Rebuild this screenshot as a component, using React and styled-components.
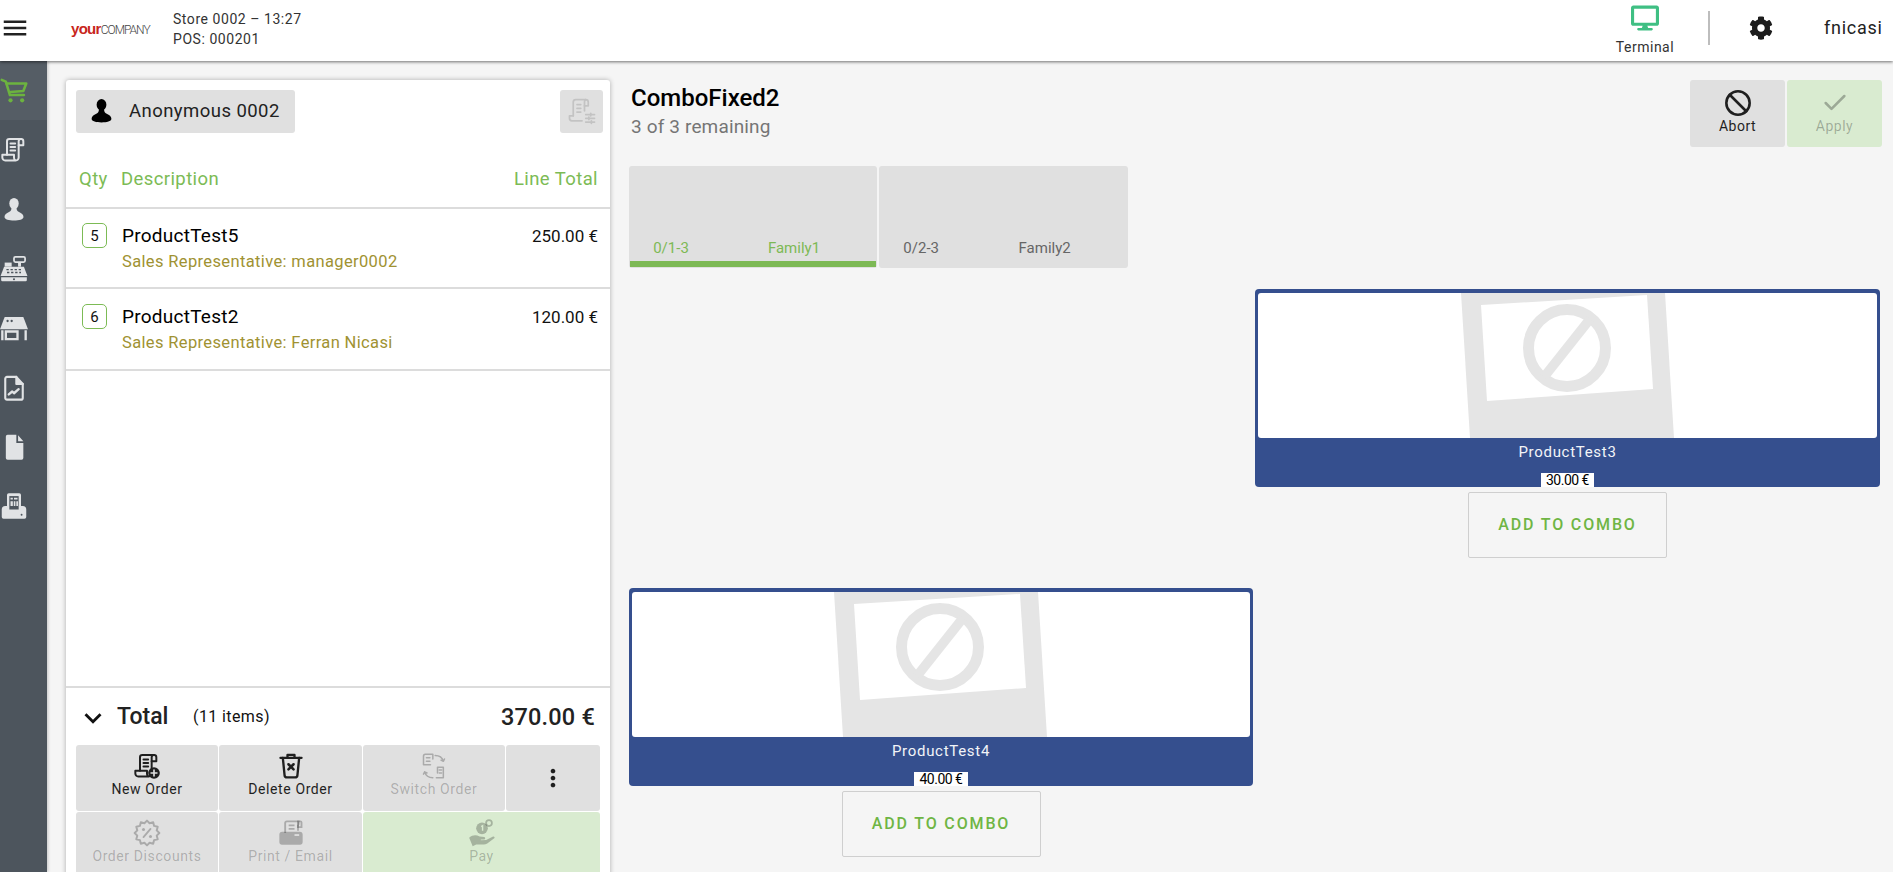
import React from "react";
import styled, { createGlobalStyle } from "styled-components";
import { Ban, Check } from "lucide-react";
import { FaCog, FaDesktop } from "react-icons/fa";
import { MdMenu, MdMoreVert, MdKeyboardArrowDown } from "react-icons/md";

const GlobalStyle = createGlobalStyle`
    html, body {
        margin: 0;
        height: 100%;
        overflow: hidden;
        background: #f5f5f5;
        font-family: Roboto, "Liberation Sans", sans-serif;
    }
    * { box-sizing: border-box; }
`;

const Page = styled.div`
    width: 1893px;
    height: 872px;
    overflow: hidden;
    display: flex;
    flex-direction: column;
`;

/* top bar */
const TopBar = styled.header`
    flex: 0 0 61px;
    position: relative;
    z-index: 2;
    display: flex;
    align-items: center;
    background: #fff;
    box-shadow: 0 1px 3px rgba(0, 0, 0, 0.55);
`;

const MenuButton = styled.div`
    width: 71px;
    padding-bottom: 5px;
    display: flex;
    color: #222;
    font-size: 30px;
`;

const Logo = styled.div`
    width: 102px;
    padding-bottom: 4px;
    display: flex;
    align-items: baseline;
    font-size: 15px;
    line-height: 1;
`;

const LogoYour = styled.span`
    font-family: "Liberation Sans", sans-serif;
    font-weight: 700;
    letter-spacing: -0.7px;
    color: #c8261c;
`;

const LogoCompany = styled.span`
    font-weight: 300;
    font-size: 12px;
    letter-spacing: -1px;
    color: #444;
`;

const StoreInfo = styled.div`
    font-size: 14px;
    line-height: 20px;
    letter-spacing: 0.55px;
    color: #333;
    margin-bottom: 4px;
`;

const TopRight = styled.div`
    margin-left: auto;
    display: flex;
    align-items: center;
`;

const Terminal = styled.div`
    width: 80px;
    margin-right: 23px;
    display: flex;
    flex-direction: column;
    align-items: center;
    font-size: 14px;
    line-height: 18px;
    letter-spacing: 0.5px;
    color: #333;
    margin-bottom: 1px;
    svg {
        color: #3fbf83;
        font-size: 28px;
        margin-bottom: 6px;
    }
`;

const Divider = styled.div`
    width: 2px;
    height: 34px;
    margin-right: 39px;
    margin-bottom: 6px;
    background: #bdbdbd;
`;

const Gear = styled.div`
    display: flex;
    margin-right: 51px;
    font-size: 24px;
    color: #1c1c1c;
    margin-bottom: 6px;
`;

const UserName = styled.div`
    width: 69px;
    font-size: 18px;
    letter-spacing: 0.75px;
    color: #222;
    margin-bottom: 6px;
`;

const Body = styled.div`
    flex: 1;
    display: flex;
    min-height: 0;
`;

/* left rail */
const Rail = styled.nav`
    flex: 0 0 47px;
    background: #4d555d;
    box-shadow: 1px 0 3px rgba(0, 0, 0, 0.2);
`;

const RailItem = styled.div`
    height: 59.4px;
    padding-right: 19px;
    display: flex;
    align-items: center;
    justify-content: center;
    color: ${(p) => (p.$active ? "#6cb33f" : "#e1e3e5")};
    background: ${(p) => (p.$active ? "#555d65" : "transparent")};
    svg {
        width: ${(p) => p.$size}px;
        height: ${(p) => p.$size}px;
        flex: none;
        display: block;
    }
`;

/* order panel */
const OrderPanel = styled.section`
    flex: 0 0 543px;
    height: 798px;
    margin: 19px 0 0 19px;
    display: flex;
    flex-direction: column;
    background: #fff;
    border-radius: 3px;
    box-shadow: 0 0 5px rgba(0, 0, 0, 0.3);
`;

const PanelTop = styled.div`
    height: 53px;
    padding: 10px 7px 0 10px;
    display: flex;
    justify-content: space-between;
`;

const CustomerButton = styled.div`
    width: 219px;
    height: 43px;
    padding: 0 0 2px 13px;
    display: flex;
    align-items: center;
    gap: 15px;
    background: #e0e0e0;
    border-radius: 3px;
    font-size: 18.5px;
    letter-spacing: 0.45px;
    color: #222;
    svg {
        width: 25px;
        height: 25px;
        color: #000;
    }
`;

const ReceiptButton = styled.div`
    width: 43px;
    height: 43px;
    display: flex;
    align-items: center;
    justify-content: center;
    background: #e0e0e0;
    border-radius: 3px;
    color: #c3c3c3;
    svg {
        width: 30px;
        height: 30px;
    }
`;

const ColumnHead = styled.div`
    height: 76px;
    padding: 17px 12px 0 13px;
    display: flex;
    align-items: center;
    border-bottom: 2px solid #dcdcdc;
    font-size: 18.5px;
    letter-spacing: 0.4px;
    color: #7cbb55;
`;

const HeadQty = styled.span`
    width: 42px;
`;

const HeadTotal = styled.span`
    margin-left: auto;
`;

const Lines = styled.div`
    flex: 1;
`;

const LineRow = styled.div`
    height: ${(p) => p.$height}px;
    padding: ${(p) => (p.$height - 52) / 2}px 12px 0 16px;
    display: flex;
    border-bottom: 2px solid #dcdcdc;
`;

const QtyBadge = styled.div`
    flex: 0 0 25px;
    height: 25px;
    margin-right: 15px;
    display: flex;
    align-items: center;
    justify-content: center;
    border: 1px solid #7cbb55;
    border-radius: 5px;
    font-size: 15px;
    color: #111;
`;

const LineText = styled.div`
    flex: 1;
`;

const LineName = styled.div`
    font-size: 19px;
    line-height: 26px;
    letter-spacing: 0.25px;
    color: #000;
`;

const LineRep = styled.div`
    font-size: 16.5px;
    line-height: 26px;
    letter-spacing: 0.36px;
    color: #a09232;
`;

const LinePrice = styled.div`
    font-size: 17px;
    line-height: 26px;
    color: #111;
`;

const Footer = styled.div`
    border-top: 2px solid #dcdcdc;
    padding: 0 10px;
`;

const TotalRow = styled.div`
    height: 57px;
    padding: 0 5px 0 0;
    display: flex;
    align-items: center;
    color: #222;
`;

const Chevron = styled.div`
    display: flex;
    width: 41px;
    margin-top: 3px;
    font-size: 34px;
    color: #111;
`;

const TotalLabel = styled.span`
    width: 76px;
    font-size: 23px;
    font-weight: 500;
`;

const TotalCount = styled.span`
    font-size: 16px;
    letter-spacing: 0.4px;
    color: #111;
`;

const TotalAmount = styled.span`
    margin-left: auto;
    font-size: 23.5px;
    font-weight: 500;
    letter-spacing: 0.2px;
`;

const ActionGrid = styled.div`
    display: grid;
    grid-template-columns: 142px 143px 142px 94px;
    grid-auto-rows: 66px;
    gap: 1px;
`;

const ActionButton = styled.div`
    grid-column: span ${(p) => p.$span || 1};
    display: flex;
    flex-direction: column;
    align-items: center;
    justify-content: ${(p) => (p.$iconOnly ? "center" : "flex-start")};
    padding-top: ${(p) => (p.$iconOnly ? 0 : 7)}px;
    border-radius: 3px;
    background: ${(p) => (p.$primary ? "#d9ebd0" : "#e0e0e0")};
    color: ${(p) => (p.$disabled ? "rgba(0,0,0,0.24)" : "#1f1f1f")};
    font-size: 14px;
    line-height: 18px;
    letter-spacing: 0.6px;
    svg {
        width: 28px;
        height: 28px;
        display: block;
    }
`;

/* combo area */
const Main = styled.main`
    flex: 1;
    min-width: 0;
    padding: 19px 11px 0 19px;
`;

const ComboHead = styled.div`
    height: 86px;
    padding-left: 2px;
    display: flex;
    justify-content: space-between;
`;

const ComboTitle = styled.div`
    padding-top: 4px;
    font-size: 24px;
    font-weight: 500;
    line-height: 28px;
    color: #000;
`;

const ComboSub = styled.div`
    margin-top: 3px;
    font-size: 19px;
    font-weight: 400;
    line-height: 24px;
    letter-spacing: 0.15px;
    color: #757575;
`;

const ComboActions = styled.div`
    display: flex;
    gap: 2px;
`;

const ComboButton = styled.div`
    width: 95px;
    height: 67px;
    padding-top: 9px;
    display: flex;
    flex-direction: column;
    align-items: center;
    border-radius: 3px;
    background: ${(p) => (p.$primary ? "#d9ebd0" : "#e0e0e0")};
    color: ${(p) => (p.$disabled ? "rgba(0,0,0,0.28)" : "#1f1f1f")};
    font-size: 14px;
    line-height: 18px;
    letter-spacing: 0.5px;
    svg {
        width: 28px;
        height: 28px;
    }
`;

const FamilyTabs = styled.div`
    display: flex;
    gap: 2px;
    margin-bottom: 21px;
`;

const FamilyTab = styled.div`
    width: 248px;
    height: 102px;
    padding: 1px;
    display: flex;
    flex-direction: column;
    justify-content: flex-end;
    border-radius: 3px;
    background: #e0e0e0;
    color: ${(p) => (p.$active ? "#7db955" : "#666")};
    font-size: 15px;
    line-height: 20px;
    &:last-child {
        width: 249px;
    }
`;

const TabText = styled.div`
    display: grid;
    grid-template-columns: 1fr 2fr;
    margin-bottom: 3px;
    text-align: center;
`;

const TabBar = styled.div`
    height: 6px;
    background: ${(p) => (p.$active ? "#7db955" : "transparent")};
`;

const ProductGrid = styled.div`
    display: grid;
    grid-template-columns: 624px 625px;
    column-gap: 2px;
    row-gap: 30px;
`;

const ProductCell = styled.div`
    grid-column: ${(p) => p.$column};
    display: flex;
    flex-direction: column;
    align-items: center;
    gap: 5px;
`;

const ProductCard = styled.div`
    width: 100%;
    height: 198px;
    padding: 4px 3px 0;
    display: flex;
    flex-direction: column;
    align-items: center;
    border-radius: 4px;
    background: #354f8e;
`;

const ProductImage = styled.div`
    width: 100%;
    height: 145px;
    flex: none;
    display: flex;
    justify-content: center;
    overflow: hidden;
    border-radius: 3px;
    background: #fff;
    svg {
        display: block;
        width: 214px;
        height: 145px;
    }
`;

const ProductName = styled.div`
    font-size: 15px;
    line-height: 28px;
    letter-spacing: 0.7px;
    color: #f2f4f8;
`;

const ProductPrice = styled.div`
    margin-top: 7px;
    padding: 0 5px;
    background: #fff;
    color: #000;
    font-size: 14px;
    line-height: 14px;
    letter-spacing: -0.5px;
`;

const AddButton = styled.div`
    width: 199px;
    height: 66px;
    padding-bottom: 2px;
    display: flex;
    align-items: center;
    justify-content: center;
    border: 1px solid #cfcfcf;
    border-radius: 2px;
    color: #6fb544;
    font-size: 16px;
    font-weight: 500;
    letter-spacing: 1.85px;
`;

/* drawn icons */
const Svg = ({ children, fill = "none", sw = 1.7 }) => (
    <svg viewBox="0 0 24 24" fill={fill} stroke={fill === "none" ? "currentColor" : "none"} strokeWidth={sw} strokeLinecap="round" strokeLinejoin="round">
        {children}
    </svg>
);

const scrollPaths = (
    <>
        <path d="M18 2.5H8a2 2 0 0 0-2 2V16" />
        <path d="M18 2.5a2 2 0 0 1 2 2V8h-4V4.500a2 2 0 0 1 2-2z" />
        <path d="M16 8v10.500a2.500 2.500 0 0 1-2.500 2.500H4.500A2.500 2.500 0 0 1 2 18.500V16h10v2.500a2.500 2.500 0 0 0 1.500 2.500" />
        <path d="M9 6.500h4M9 9.500h4M9 12.500h4" />
    </>
);

const CartIcon = () => (
    <svg viewBox="0 0 24 24" fill="none" stroke="currentColor" strokeWidth="2.200" strokeLinejoin="round" strokeLinecap="round">
        <path d="M1.500 2.500L5 4l3.500 11.500h12" />
        <path d="M5.500 5.500h17l-2.500 6.500-11 .8" />
        <circle cx="9" cy="20" r="1.800" fill="currentColor" stroke="none" />
        <circle cx="19" cy="20" r="1.800" fill="currentColor" stroke="none" />
    </svg>
);

const ScrollIcon = () => <Svg>{scrollPaths}</Svg>;

const ScrollSlidersIcon = () => (
    <Svg sw={1.4}>
        <path d="M15 2H7a2 2 0 0 0-2 2v11" />
        <path d="M15 2a2 2 0 0 1 2 2v3h-3V4a2 2 0 0 1 1-2z" />
        <path d="M14 7v4" />
        <path d="M5 15H2v2a2 2 0 0 0 2 2h8" />
        <path d="M8 6h3M8 9h3M8 12h3" />
        <path d="M15 14h7M15 17h7M15 20h7" />
        <path d="M19 13v2M17.500 16v2M19.500 19v2" />
    </Svg>
);

const NewOrderIcon = () => (
    <Svg sw={1.7}>
        {scrollPaths}
        <circle cx="18" cy="18" r="5" fill="currentColor" stroke="none" />
        <path d="M18 15.500v5M15.500 18h5" stroke="#e0e0e0" strokeWidth="1.4" />
    </Svg>
);

const TrashIcon = () => (
    <Svg sw={2}>
        <path d="M3 5h18" />
        <path d="M9 4V2.500h6V4" />
        <path d="M5 5l1.500 15a2 2 0 0 0 2 1.800h7a2 2 0 0 0 2-1.800L19 5" />
        <path d="M9.800 10.500l4.400 4.400M14.200 10.500l-4.400 4.400" strokeWidth="2.200" />
    </Svg>
);

const SwitchIcon = () => (
    <Svg sw={1.3}>
        <path d="M3 11V3.500A1.500 1.500 0 0 1 4.500 2H11v4M3 11h6" />
        <path d="M5.500 5h3M5.500 8h3" />
        <path d="M13 3c3 0 6 1.500 7 5M20 8l-2-1M20 8l1-2" />
        <path d="M14 22h6V13h-5v5" />
        <path d="M16.500 15.500h2M16.500 18h2" />
        <path d="M11 22c-3 0-6-1.500-7-5M4 17l2 1M4 17l-1 2" />
    </Svg>
);

// 12 pointed seal, the outline of the discount badge
const sealPoints = Array.from({ length: 24 }, (_, i) => {
    const r = i % 2 === 0 ? 10.6 : 8.6;
    const a = (i * Math.PI) / 12;
    return `${(12 + r * Math.sin(a)).toFixed(2)},${(12 - r * Math.cos(a)).toFixed(2)}`;
}).join(" ");

const DiscountIcon = () => (
    <Svg sw={1.7}>
        <polygon points={sealPoints} />
        <path d="M15 8.500l-6 7" strokeWidth="1.600" />
        <circle cx="9" cy="9" r="1.300" fill="currentColor" stroke="none" />
        <circle cx="15" cy="15" r="1.300" fill="currentColor" stroke="none" />
    </Svg>
);

const PrintIcon = () => (
    <svg viewBox="0 0 24 24">
        <path d="M7 12V3.500A1.500 1.500 0 0 1 8.500 2h10v3" fill="none" stroke="currentColor" strokeWidth="1.600" />
        <path d="M18 2h2a1 1 0 0 1 1 1v4h-3z" fill="none" stroke="currentColor" strokeWidth="1.600" />
        <path d="M18 5v5M10 5.500h5M10 8.500h5" fill="none" stroke="currentColor" strokeWidth="1.600" />
        <path d="M4.500 11h15a2.500 2.500 0 0 1 2.500 2.500V20a2 2 0 0 1-2 2H4a2 2 0 0 1-2-2v-6.500A2.500 2.500 0 0 1 4.500 11z" fill="currentColor" />
        <rect x="15" y="13" width="4" height="1.500" fill="#e0e0e0" />
    </svg>
);

const PayIcon = () => (
    <svg viewBox="0 0 24 24" fill="currentColor">
        <circle cx="12" cy="8" r="5" />
        <circle cx="18" cy="3.500" r="2.500" fill="none" stroke="currentColor" strokeWidth="1.500" />
        <path d="M1 16c3-2.500 6-2.500 9-1l4 .5c1 .2 1 1.800 0 2h-3v.8l4.500-.3 6-3c1-.3 1.800.8 1 1.500l-6 4.500c-1 .6-2 .8-3 .8H7l-3 1.500z" />
        <path d="M11.300 6.500l1.200-.7V10" fill="none" stroke="#d9ebd0" strokeWidth="1.200" />
    </svg>
);

const PersonIcon = () => (
    <Svg fill="currentColor">
        <ellipse cx="12" cy="6.500" rx="4.700" ry="5.500" />
        <path d="M9.500 10.500c0 2.500-.5 3.500-2.500 4.500-2.500 1.200-4.500 2.500-4.500 5 0 2.500 4.500 3.500 9.500 3.500s9.500-1 9.500-3.500c0-2.500-2-3.800-4.500-5-2-1-2.500-2-2.500-4.500z" />
    </Svg>
);

const RegisterIcon = () => (
    <svg viewBox="0 0 24 24" fill="currentColor">
        <rect x="12" y="1.500" width="9.500" height="4.500" rx="1.200" fill="none" stroke="currentColor" strokeWidth="1.500" />
        <rect x="15.500" y="6" width="2.500" height="4" />
        <rect x="4" y="6.500" width="6" height="3.500" />
        <path d="M3.500 10h17l3 8H.5z" />
        <path d="M5.500 12.500h2M9 12.500h2M12.500 12.500h2M16 12.500h2M6 15h2M9.500 15h2M13 15h2M16.500 15h1.500" stroke="#4d555d" strokeWidth="1.100" />
        <path d="M1 19h22v2.500a1 1 0 0 1-1 1H2a1 1 0 0 1-1-1z" />
        <circle cx="12" cy="20.800" r="0.900" fill="#4d555d" />
    </svg>
);

const StoreIcon = () => (
    <svg viewBox="0 0 24 24" fill="currentColor">
        <path d="M4 2.500h16l4 10.500H0z" />
        <circle cx="6.500" cy="6" r="1" fill="#4d555d" />
        <circle cx="10" cy="6" r="1" fill="#4d555d" />
        <path d="M1 14h2v8.500H1zM21 14h2v8.500h-2zM4 14h12v8.500H4zM6 16v4.500h8V16z" fillRule="evenodd" />
    </svg>
);

const ReportIcon = () => (
    <Svg sw={1.8}>
        <path d="M6 2.500h8l5.500 6v12a1.500 1.500 0 0 1-1.500 1.500H6a1.500 1.500 0 0 1-1.500-1.500v-16.500A1.500 1.500 0 0 1 6 2.500z" />
        <path d="M14 2.500v6h5.500" fill="currentColor" />
        <path d="M7.500 17.500l3-2.500 1.500 1.500 4-3.500" strokeWidth="2" />
    </Svg>
);

const FileIcon = () => (
    <svg viewBox="0 0 24 24" fill="currentColor">
        <path d="M6.500 1.500h7.500v7h6v13a1.500 1.500 0 0 1-1.500 1.500h-12A1.500 1.500 0 0 1 5 21.500v-18.500a1.500 1.500 0 0 1 1.500-1.500zM15.500 2l4.500 5h-4.500z" />
    </svg>
);

const PosIcon = () => (
    <svg viewBox="0 0 24 24" fill="currentColor">
        <path d="M7.500 1h9A1.500 1.500 0 0 1 18 2.500V12h1.500a3 3 0 0 1 3 3v6.500a1.500 1.500 0 0 1-1.500 1.500H3a1.500 1.500 0 0 1-1.500-1.500V15a3 3 0 0 1 3-3H6V2.500A1.500 1.500 0 0 1 7.500 1z" />
        <path d="M8 3.500h8V15H8z" fill="#4d555d" />
        <path d="M9 5h2v1.500H9zM12 5h3v1.500h-3zM9 8h2v4H9zM11.800 8h1.400v4h-1.400zM14 8h1.400v4H14z" />
        <circle cx="18.500" cy="19.500" r="0.800" fill="#4d555d" />
    </svg>
);

const Placeholder = () => (
    <svg viewBox="0 0 214 145">
        <polygon points="0,0 204,0 213,145 9,145" fill="#e5e5e5" />
        <polygon points="20,12 186,2 192,96 26,108" fill="#fff" />
        <circle cx="106" cy="55" r="38.500" fill="none" stroke="#e5e5e5" strokeWidth="11" />
        <line x1="129" y1="26" x2="83" y2="84" stroke="#e5e5e5" strokeWidth="9.500" />
    </svg>
);

const railItems = [
    { icon: <CartIcon />, size: 28 },
    { icon: <ScrollIcon />, size: 28 },
    { icon: <PersonIcon />, size: 24 },
    { icon: <RegisterIcon />, size: 28 },
    { icon: <StoreIcon />, size: 28 },
    { icon: <ReportIcon />, size: 28 },
    { icon: <FileIcon />, size: 28 },
    { icon: <PosIcon />, size: 28 },
];

const orderLines = [
    { qty: 5, name: "ProductTest5", rep: "manager0002", price: "250.00 €", height: 80 },
    { qty: 6, name: "ProductTest2", rep: "Ferran Nicasi", price: "120.00 €", height: 82 },
];

const products = [
    { name: "ProductTest3", price: "30.00 €", column: 2 },
    { name: "ProductTest4", price: "40.00 €", column: 1 },
];

function App() {
    return (
        <Page>
            <GlobalStyle />
            <TopBar>
                <MenuButton>
                    <MdMenu />
                </MenuButton>
                <Logo>
                    <LogoYour>your</LogoYour>
                    <LogoCompany>COMPANY</LogoCompany>
                </Logo>
                <StoreInfo>
                    <div>Store 0002 – 13:27</div>
                    <div>POS: 000201</div>
                </StoreInfo>
                <TopRight>
                    <Terminal>
                        <FaDesktop />
                        Terminal
                    </Terminal>
                    <Divider />
                    <Gear>
                        <FaCog />
                    </Gear>
                    <UserName>fnicasi</UserName>
                </TopRight>
            </TopBar>
            <Body>
                <Rail>
                    {railItems.map((item, i) => (
                        <RailItem key={i} $active={i === 0} $size={item.size}>
                            {item.icon}
                        </RailItem>
                    ))}
                </Rail>
                <OrderPanel>
                    <PanelTop>
                        <CustomerButton>
                            <PersonIcon />
                            Anonymous 0002
                        </CustomerButton>
                        <ReceiptButton>
                            <ScrollSlidersIcon />
                        </ReceiptButton>
                    </PanelTop>
                    <ColumnHead>
                        <HeadQty>Qty</HeadQty>
                        <span>Description</span>
                        <HeadTotal>Line Total</HeadTotal>
                    </ColumnHead>
                    <Lines>
                        {orderLines.map((line) => (
                            <LineRow key={line.name} $height={line.height}>
                                <QtyBadge>{line.qty}</QtyBadge>
                                <LineText>
                                    <LineName>{line.name}</LineName>
                                    <LineRep>Sales Representative: {line.rep}</LineRep>
                                </LineText>
                                <LinePrice>{line.price}</LinePrice>
                            </LineRow>
                        ))}
                    </Lines>
                    <Footer>
                        <TotalRow>
                            <Chevron>
                                <MdKeyboardArrowDown />
                            </Chevron>
                            <TotalLabel>Total</TotalLabel>
                            <TotalCount>(11 items)</TotalCount>
                            <TotalAmount>370.00 €</TotalAmount>
                        </TotalRow>
                        <ActionGrid>
                            <ActionButton>
                                <NewOrderIcon />
                                New Order
                            </ActionButton>
                            <ActionButton>
                                <TrashIcon />
                                Delete Order
                            </ActionButton>
                            <ActionButton $disabled>
                                <SwitchIcon />
                                Switch Order
                            </ActionButton>
                            <ActionButton $iconOnly>
                                <MdMoreVert />
                            </ActionButton>
                            <ActionButton $disabled>
                                <DiscountIcon />
                                Order Discounts
                            </ActionButton>
                            <ActionButton $disabled>
                                <PrintIcon />
                                Print / Email
                            </ActionButton>
                            <ActionButton $disabled $primary $span={2}>
                                <PayIcon />
                                Pay
                            </ActionButton>
                        </ActionGrid>
                    </Footer>
                </OrderPanel>
                <Main>
                    <ComboHead>
                        <ComboTitle>
                            ComboFixed2
                            <ComboSub>3 of 3 remaining</ComboSub>
                        </ComboTitle>
                        <ComboActions>
                            <ComboButton>
                                <Ban strokeWidth={2.2} />
                                Abort
                            </ComboButton>
                            <ComboButton $primary $disabled>
                                <Check strokeWidth={2.2} />
                                Apply
                            </ComboButton>
                        </ComboActions>
                    </ComboHead>
                    <FamilyTabs>
                        <FamilyTab $active>
                            <TabText>
                                <span>0/1-3</span>
                                <span>Family1</span>
                            </TabText>
                            <TabBar $active />
                        </FamilyTab>
                        <FamilyTab>
                            <TabText>
                                <span>0/2-3</span>
                                <span>Family2</span>
                            </TabText>
                            <TabBar />
                        </FamilyTab>
                    </FamilyTabs>
                    <ProductGrid>
                        {products.map((product) => (
                            <ProductCell key={product.name} $column={product.column}>
                                <ProductCard>
                                    <ProductImage>
                                        <Placeholder />
                                    </ProductImage>
                                    <ProductName>{product.name}</ProductName>
                                    <ProductPrice>{product.price}</ProductPrice>
                                </ProductCard>
                                <AddButton>ADD TO COMBO</AddButton>
                            </ProductCell>
                        ))}
                    </ProductGrid>
                </Main>
            </Body>
        </Page>
    );
}

export default App;
